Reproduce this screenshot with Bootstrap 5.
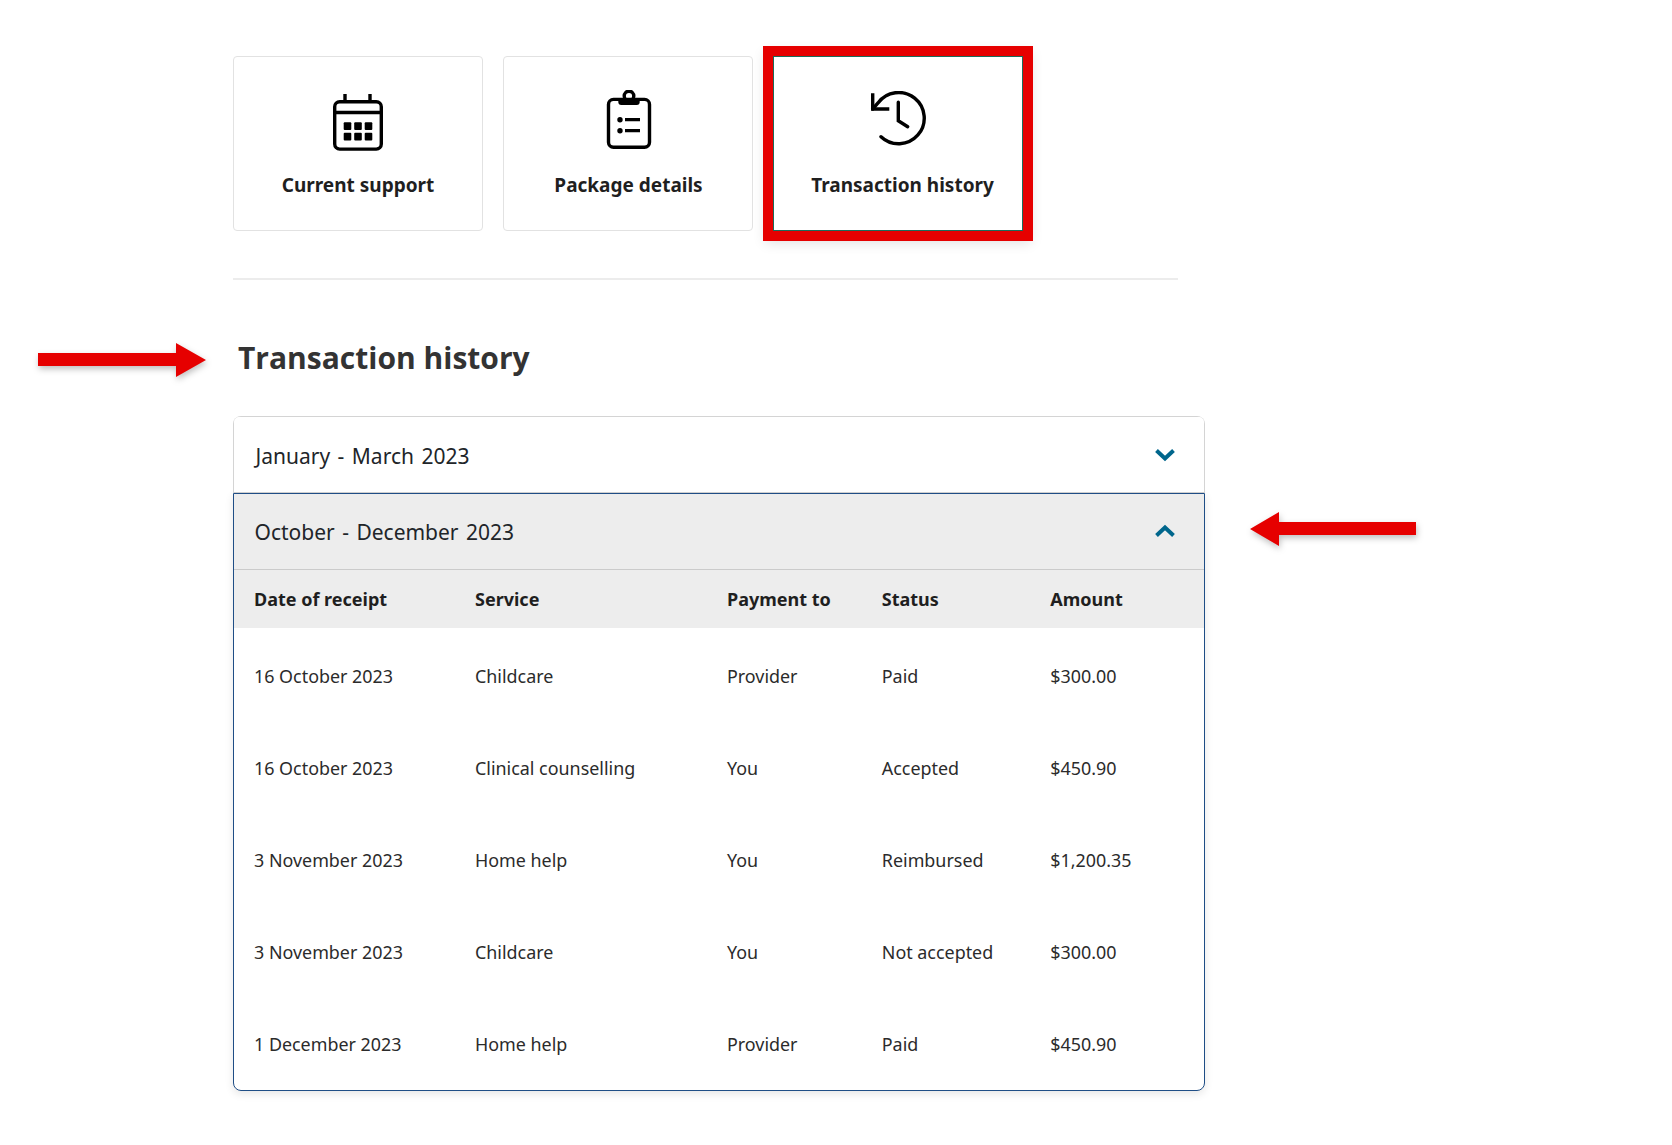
<!DOCTYPE html>
<html lang="en">
<head>
<meta charset="utf-8">
<title>Transaction history</title>
<link href="https://cdn.jsdelivr.net/npm/bootstrap@5.3.0/dist/css/bootstrap.min.css" rel="stylesheet">
<style>
html,body{background:#fff;overflow:hidden}
body{height:1145px;position:relative;font-family:"Noto Sans","Open Sans",sans-serif;color:#212529}
.page-wrap{margin-left:233px;width:972px;padding-top:56px}
.tile-row{gap:20px}
.tile{width:250px;height:175px;border:1px solid #e2e2e2;border-radius:4px;background:#fff;font-weight:700;font-size:19px;color:#1f1f1f;position:relative}
.tile-icon{position:absolute;left:0;right:0;display:flex;justify-content:center}
.tile-label{position:absolute;left:0;right:0;top:113px;line-height:30px;text-align:center}
.tile-active{outline:10px solid #e60000;box-shadow:0 4px 12px 8px rgba(0,0,0,.12);border-color:#1a6b5a;border-radius:0}
.rule{width:945px;height:2px;background:#ececec;margin:47px 0 0}
.page-title{font-family:"Open Sans",sans-serif;font-weight:700;font-size:30px;line-height:40px;color:#333;margin:58px 0 0 5px}
.acc-list{margin-top:38px}
.acc-list .accordion-item{background:#fff;border-radius:8px 8px 0 0;border:1px solid #d4d4d4;border-bottom:0}
.acc-list .accordion-item.opened{border:1px solid #1f4e86;border-radius:0 0 8px 8px;box-shadow:0 3px 8px rgba(0,0,0,.1)}
.acc-list .accordion-button{height:76px;padding:5px 29px 0 21.500px;font-size:21px;word-spacing:2px;color:#212529;background:#fff;box-shadow:none;border-radius:8px 8px 0 0;border-bottom:1px solid #cfcfcf}
.acc-list .opened .accordion-button{background:#ededed;border-radius:0;border-bottom:1px solid #cbcbcb;padding-top:2px;padding-left:20.500px}
.acc-list .accordion-button::after{display:none}
.acc-list .accordion-button svg{margin-bottom:5px}
.acc-list .opened .accordion-button svg{margin-bottom:2.400px}
.acc-list .table{margin:0;table-layout:fixed;font-size:17.9px;--bs-table-border-color:transparent}
.acc-list th{background:#ededed;height:58px;padding:0 0 0 20px;vertical-align:middle;font-weight:700;font-size:18px;color:#1f1f1f;border:0}
.acc-list td{padding:33px 0 33px 20px;line-height:26px;color:#2b2b2b;border:0;vertical-align:top}
.acc-list tbody tr:first-child td{padding-top:34.500px}
.acc-list tbody tr:last-child td{padding-bottom:33.600px}
.c1{width:241px}.c2{width:252px}.c3{width:154.800px}.c4{width:168.500px}
.acc-list .c2,.acc-list .c3,.acc-list .c4,.acc-list .c5{padding-left:0}
.note-arrow{position:absolute;filter:drop-shadow(1px 3px 3px rgba(0,0,0,.25))}
</style>
</head>
<body>
<div class="page-wrap">
  <div class="d-flex tile-row">
    <div class="tile">
      <div class="tile-icon" style="top:37px">
        <svg width="50" height="58" viewBox="0 0 50 58" fill="none" stroke="#000" stroke-width="3.4">
          <rect x="1.700" y="7.700" width="46.600" height="47.400" rx="5"/>
          <path d="M1.700 18.500h46.600"/>
          <path d="M12 0v8M37 0v8"/>
          <g fill="#000" stroke="none">
            <rect x="10.700" y="28.300" width="7.600" height="7.700" rx="1"/><rect x="21.200" y="28.300" width="7.600" height="7.700" rx="1"/><rect x="31.700" y="28.300" width="7.600" height="7.700" rx="1"/>
            <rect x="10.700" y="38.800" width="7.600" height="7.700" rx="1"/><rect x="21.200" y="38.800" width="7.600" height="7.700" rx="1"/><rect x="31.700" y="38.800" width="7.600" height="7.700" rx="1"/>
          </g>
        </svg>
      </div>
      <div class="tile-label">Current support</div>
    </div>
    <div class="tile">
      <div class="tile-icon" style="top:33px;padding-left:2px">
        <svg width="46" height="60" viewBox="0 0 46 60" fill="none" stroke="#000" stroke-width="3.4">
          <rect x="2.500" y="9.400" width="41" height="47.900" rx="5"/>
          <circle cx="23" cy="6" r="4.800"/>
          <path d="M12.300 9.400h21.400v2.600a3 3 0 0 1-3 3H15.300a3 3 0 0 1-3-3z" fill="#000" stroke="none"/>
          <circle cx="14" cy="29.700" r="2.700" fill="#000" stroke="none"/>
          <circle cx="14" cy="40.700" r="2.700" fill="#000" stroke="none"/>
          <path d="M19 29.700h15M19 40.700h15" stroke-width="3.200"/>
        </svg>
      </div>
      <div class="tile-label" style="padding-left:1px">Package details</div>
    </div>
    <div class="tile tile-active">
      <div class="tile-icon" style="top:34px">
        <svg width="56" height="56" viewBox="0 0 56 56" fill="none" stroke="#000" stroke-width="3.4" stroke-linecap="round">
          <path d="M2.700 18 8 12A25.600 25.600 0 1 1 11 45.700"/>
          <path d="M2.700 2.300V18h16.600" stroke-linecap="butt"/>
          <path d="M28.300 11.300v18.400l9.400 6"/>
        </svg>
      </div>
      <div class="tile-label" style="padding-left:9px">Transaction history</div>
    </div>
  </div>
  <div class="rule"></div>
  <h2 class="page-title">Transaction history</h2>
  <div class="accordion acc-list">
    <div class="accordion-item">
      <h3 class="accordion-header m-0">
        <button class="accordion-button collapsed" type="button" aria-expanded="false">
          January - March 2023
          <svg class="ms-auto" width="20" height="14" viewBox="0 0 20 14" fill="none" stroke="#00668c" stroke-width="4"><path d="M1.500 2.500 10 10.500l8.500-8"/></svg>
        </button>
      </h3>
    </div>
    <div class="accordion-item opened">
      <h3 class="accordion-header m-0">
        <button class="accordion-button" type="button" aria-expanded="true">
          October - December 2023
          <svg class="ms-auto" width="20" height="14" viewBox="0 0 20 14" fill="none" stroke="#00668c" stroke-width="4"><path d="M1.500 11.500 10 3.500l8.500 8"/></svg>
        </button>
      </h3>
      <div class="accordion-collapse collapse show">
        <table class="table">
          <thead>
            <tr><th class="c1">Date of receipt</th><th class="c2">Service</th><th class="c3">Payment to</th><th class="c4">Status</th><th class="c5">Amount</th></tr>
          </thead>
          <tbody>
            <tr><td class="c1">16 October 2023</td><td class="c2">Childcare</td><td class="c3">Provider</td><td class="c4">Paid</td><td class="c5">$300.00</td></tr>
            <tr><td class="c1">16 October 2023</td><td class="c2">Clinical counselling</td><td class="c3">You</td><td class="c4">Accepted</td><td class="c5">$450.90</td></tr>
            <tr><td class="c1">3 November 2023</td><td class="c2">Home help</td><td class="c3">You</td><td class="c4">Reimbursed</td><td class="c5">$1,200.35</td></tr>
            <tr><td class="c1">3 November 2023</td><td class="c2">Childcare</td><td class="c3">You</td><td class="c4">Not accepted</td><td class="c5">$300.00</td></tr>
            <tr><td class="c1">1 December 2023</td><td class="c2">Home help</td><td class="c3">Provider</td><td class="c4">Paid</td><td class="c5">$450.90</td></tr>
          </tbody>
        </table>
      </div>
    </div>
  </div>
</div>
<svg class="note-arrow" style="left:38px;top:343px" width="168" height="34" viewBox="0 0 168 34"><path d="M0 10h138V0l30 17-30 17V23H0z" fill="#e60000"/></svg>
<svg class="note-arrow" style="left:1250px;top:512px" width="166" height="34" viewBox="0 0 166 34"><path d="M166 10H29V0L0 17l29 17V23h137z" fill="#e60000"/></svg>
<script src="https://cdn.jsdelivr.net/npm/bootstrap@5.3.0/dist/js/bootstrap.bundle.min.js"></script>
</body>
</html>
